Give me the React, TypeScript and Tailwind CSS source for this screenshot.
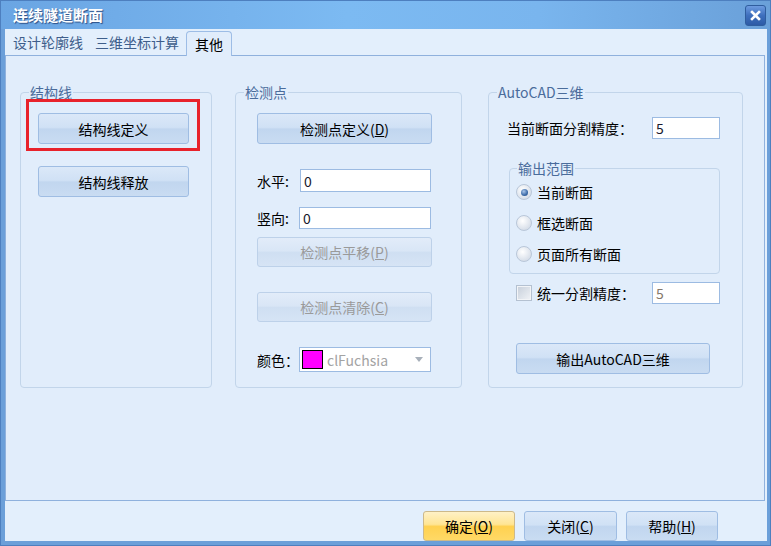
import React from 'react';

type BtnProps = {
  children: React.ReactNode;
  disabled?: boolean;
  primary?: boolean;
  className?: string;
};

function Btn({ children, disabled, primary, className = '' }: BtnProps) {
  let look =
    'border-[#9fbde3] bg-[linear-gradient(to_bottom,#dbe8f8_0%,#d0e1f5_46%,#c1d6ef_52%,#c9dcf2_100%)] text-black';
  if (disabled) {
    look =
      'border-[#bdd1e9] bg-[linear-gradient(to_bottom,#e2ecf9_0%,#d9e6f6_46%,#cfdff2_52%,#d6e4f5_100%)] text-[#9a9a9a]';
  }
  if (primary) {
    look =
      'border-[#cdb98a] bg-[linear-gradient(to_bottom,#fff1c6_0%,#ffe594_44%,#ffd150_52%,#ffd966_100%)] text-black';
  }
  return (
    <button
      type="button"
      className={`flex items-center justify-center rounded-[3px] border text-[14px] leading-none ${look} ${className}`}
    >
      {children}
    </button>
  );
}

function Group({
  title,
  className = '',
  legendClass = 'ml-[8px]',
  children,
}: {
  title: string;
  className?: string;
  legendClass?: string;
  children: React.ReactNode;
}) {
  return (
    <fieldset className={`rounded-[4px] border border-[#c2d5ea] ${className}`}>
      <legend className={`px-[1px] text-[14px] leading-[20px] text-[#4a6c9b] ${legendClass}`}>{title}</legend>
      {children}
    </fieldset>
  );
}

function Field({ value, muted, className = '' }: { value: string; muted?: boolean; className?: string }) {
  return (
    <div
      className={`flex items-center border border-[#9cbbe2] bg-white pl-[3px] text-[14px] leading-none ${
        muted ? 'text-[#85786a]' : 'text-[#1a1a2e]'
      } ${className}`}
    >
      {value}
    </div>
  );
}

function Radio({ label, checked }: { label: string; checked?: boolean }) {
  return (
    <div className="flex h-[20px] items-center">
      <div className="flex h-[16px] w-[16px] items-center justify-center rounded-full border border-[#b9c7d9] bg-[radial-gradient(circle_at_40%_35%,#ffffff,#d9e0ea_70%,#c7d0dc)]">
        {checked && (
          <div className="h-[7px] w-[7px] rounded-full bg-[radial-gradient(circle_at_40%_35%,#a9c6ea,#3b6aa8_60%,#24497e)]" />
        )}
      </div>
      <span className="ml-[5px] text-[14px] leading-none text-black">{label}</span>
    </div>
  );
}

export default function App() {
  return (
    <div className="flex h-[546px] w-[771px] flex-col border border-[#4d7fbf] bg-[#6b9fd9] font-['Noto_Sans_CJK_SC',sans-serif]">
      {/* title bar */}
      <div className="flex h-[28px] items-start bg-[linear-gradient(to_right,#6aa5e3,#7cbaf2_45%,#79b5ee_70%,#6aa0d9)]">
        <div className="pl-[12px] pt-[4px] text-[15px] font-bold leading-[20px] text-white [text-shadow:1px_1px_1px_#2c4f86]">
          连续隧道断面
        </div>
        <div className="ml-auto mr-[4px] mt-[4px] flex h-[21px] w-[21px] items-center justify-center rounded-[3px] border border-[#2f5d9e] bg-[linear-gradient(to_bottom,#6d9be0,#3e6fbd_50%,#2d5ba6)]">
          <svg width="11" height="11" viewBox="0 0 11 11">
            <path d="M2 2 L9 9 M9 2 L2 9" stroke="#ffffff" strokeWidth="2.6" strokeLinecap="square" />
          </svg>
        </div>
      </div>

      {/* body */}
      <div className="mb-[4px] ml-[4px] mr-[3px] flex flex-1 flex-col bg-[#e3effc]">
        {/* tabs */}
        <div className="flex h-[26px] items-end">
          <div className="mb-[4px] ml-[2px] px-[6px] text-[14px] leading-[18px] text-[#3e5e8b]">设计轮廓线</div>
          <div className="mb-[4px] px-[6px] text-[14px] leading-[18px] text-[#3e5e8b]">三维坐标计算</div>
          <div className="relative z-10 -mb-px ml-[1px] flex h-[25px] items-center rounded-t-[4px] border border-b-0 border-[#9dbde6] bg-[#e1edfb] px-[8px] text-[14px] leading-none text-black">
            其他
          </div>
        </div>

        {/* panel */}
        <div className="mr-[2px] flex h-[446px] items-start border border-[#8fb1dd] bg-[#e1edfb] pl-[14px] pt-[26px]">
          <Group title="结构线" className="h-[306px] w-[192px]">
            <div className="flex flex-col pl-[17px]">
              <div className="relative mt-[11px] h-[31px] w-[151px]">
                <Btn className="h-full w-full">结构线定义</Btn>
                <div className="absolute -left-[12px] -top-[14px] h-[52px] w-[174px] border-[3px] border-[#e8222b]" />
              </div>
              <Btn className="mt-[22px] h-[31px] w-[151px]">结构线释放</Btn>
            </div>
          </Group>

          <Group title="检测点" className="ml-[23px] h-[306px] w-[227px]">
            <div className="flex flex-col pl-[21px]">
              <Btn className="mt-[11px] h-[31px] w-[175px]">
                检测点定义(<span className="underline">D</span>)
              </Btn>
              <div className="mt-[25px] flex h-[23px] items-center">
                <span className="w-[43px] text-[14px] leading-none text-black">水平:</span>
                <Field value="0" className="h-[23px] w-[131px]" />
              </div>
              <div className="mt-[15px] flex h-[22px] items-center">
                <span className="w-[42px] text-[14px] leading-none text-black">竖向:</span>
                <Field value="0" className="h-[22px] w-[132px]" />
              </div>
              <Btn disabled className="mt-[8px] h-[30px] w-[175px]">
                检测点平移(<span className="underline">P</span>)
              </Btn>
              <Btn disabled className="mt-[25px] h-[30px] w-[175px]">
                检测点清除(<span className="underline">C</span>)
              </Btn>
              <div className="mt-[25px] flex h-[25px] items-center">
                <span className="w-[42px] text-[14px] leading-none text-black">颜色：</span>
                <div className="flex h-[25px] w-[132px] items-center border border-[#9cbbe2] bg-white pl-[2px]">
                  <div className="h-[19px] w-[21px] border border-black bg-[#ff00ff]" />
                  <span className="ml-[4px] text-[14px] leading-none text-[#a3a3a3]">clFuchsia</span>
                  <svg className="ml-auto mr-[7px]" width="8" height="5" viewBox="0 0 8 5">
                    <path d="M0 0 H8 L4 5 Z" fill="#a8b0ba" />
                  </svg>
                </div>
              </div>
            </div>
          </Group>

          <Group title="AutoCAD三维" className="ml-[26px] h-[306px] w-[255px]">
            <div className="flex flex-col pl-[18px] pr-[22px]">
              <div className="mt-[15px] flex h-[22px] items-center">
                <span className="text-[14px] leading-none text-black">当前断面分割精度：</span>
                <Field value="5" className="ml-auto h-[22px] w-[68px]" />
              </div>
              <Group title="输出范围" legendClass="ml-[7px]" className="ml-[2px] mt-[19px] h-[116px] w-[211px]">
                <div className="flex flex-col gap-[11px] pl-[6px] pt-[4px]">
                  <Radio label="当前断面" checked />
                  <Radio label="框选断面" />
                  <Radio label="页面所有断面" />
                </div>
              </Group>
              <div className="mt-[8px] flex h-[22px] items-center">
                <div className="ml-[9px] flex h-[16px] w-[16px] items-center justify-center border border-[#b4c1d1] bg-[#f2f4f7]">
                  <div className="h-[12px] w-[12px] bg-[linear-gradient(135deg,#c9d1dc,#eef1f5)]" />
                </div>
                <span className="ml-[5px] text-[14px] leading-none text-black">统一分割精度：</span>
                <Field value="5" muted className="ml-auto h-[22px] w-[68px]" />
              </div>
              <Btn className="ml-[9px] mt-[39px] h-[31px] w-[194px]">输出AutoCAD三维</Btn>
            </div>
          </Group>
        </div>

        {/* footer */}
        <div className="flex justify-end gap-[9px] pr-[49px] pt-[10px]">
          <Btn primary className="h-[30px] w-[92px]">
            确定(<span className="underline">O</span>)
          </Btn>
          <Btn className="h-[30px] w-[93px]">
            关闭(<span className="underline">C</span>)
          </Btn>
          <Btn className="h-[30px] w-[92px]">
            帮助(<span className="underline">H</span>)
          </Btn>
        </div>
      </div>
    </div>
  );
}
